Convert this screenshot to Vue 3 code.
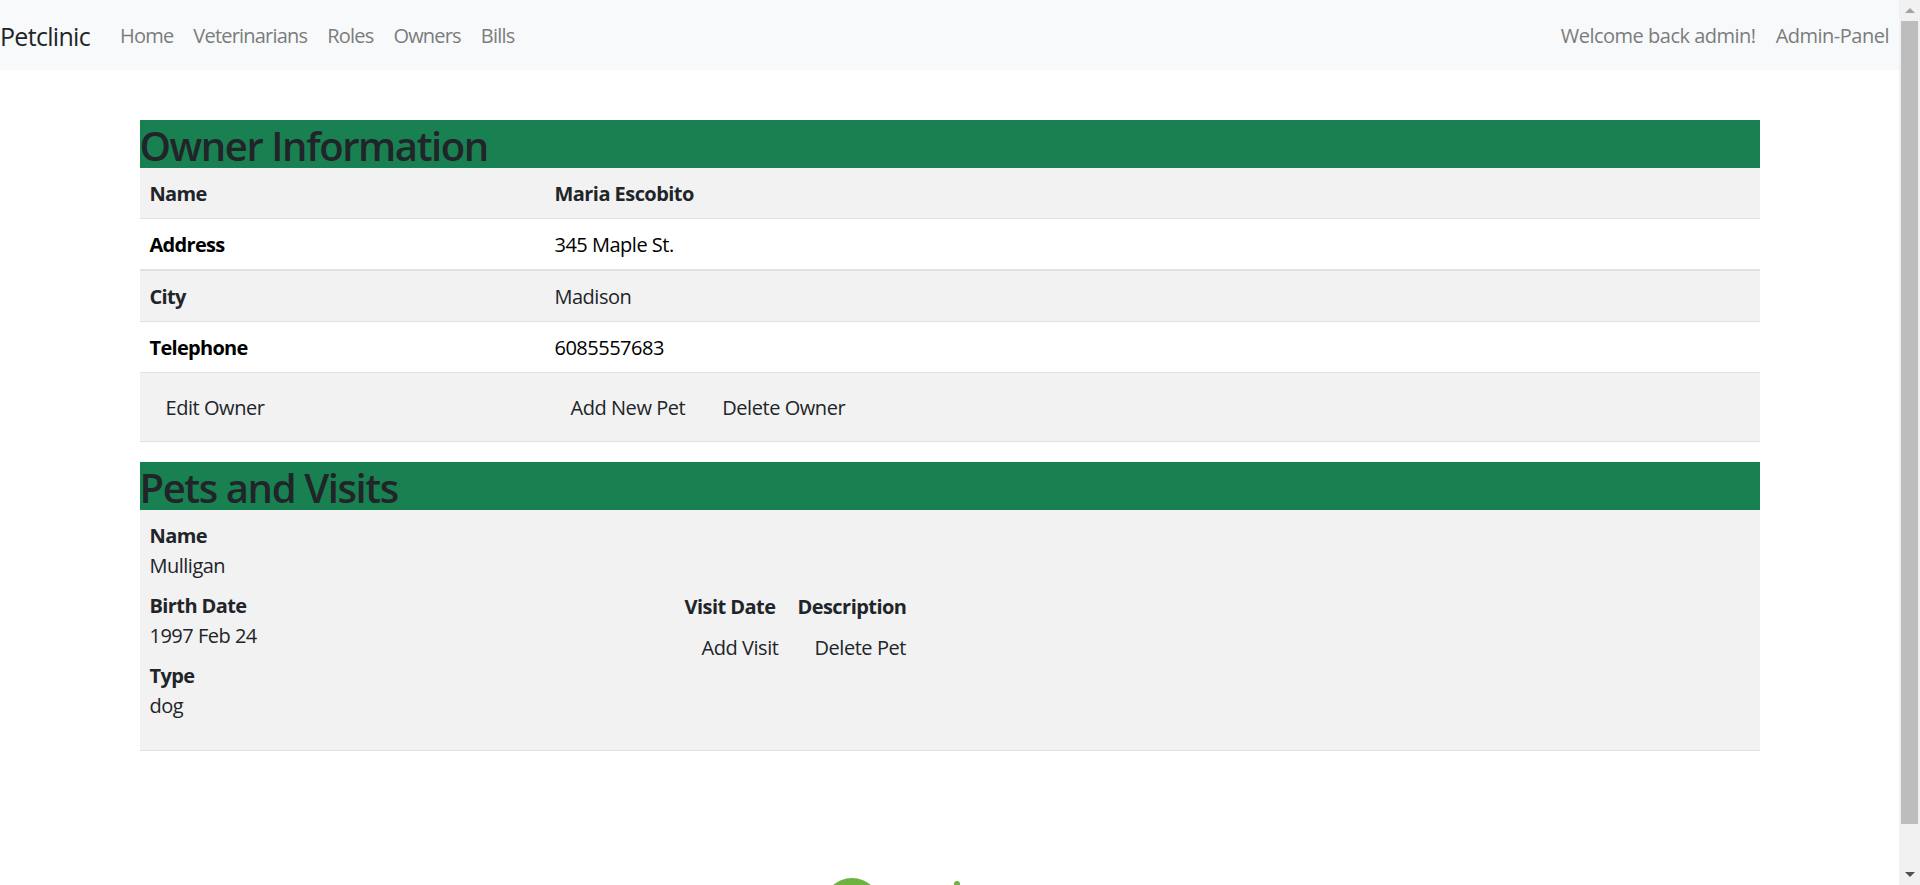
<template>
  <div class="app">
    <div class="page">
      <nav class="navbar">
        <a class="brand">Petclinic</a>
        <a v-for="link in links" :key="link" class="nav-link nav-left">{{ link }}</a>
        <span class="nav-link nav-right">Welcome back admin!</span>
        <a class="nav-link">Admin-Panel</a>
      </nav>

      <main class="container">
        <h2 class="title">Owner Information</h2>
        <table class="info-table">
          <colgroup>
            <col class="col-label" />
            <col />
          </colgroup>
          <tbody>
            <tr v-for="row in ownerRows" :key="row.label">
              <th>{{ row.label }}</th>
              <td :class="{ strong: row.strong }">{{ row.value }}</td>
            </tr>
            <tr class="action-row">
              <td><a class="btn">Edit Owner</a></td>
              <td>
                <a class="btn">Add New Pet</a>
                <a class="btn">Delete Owner</a>
              </td>
            </tr>
          </tbody>
        </table>

        <h2 class="title">Pets and Visits</h2>
        <div class="pet-row">
          <dl class="pet-info">
            <template v-for="item in petInfo" :key="item.label">
              <dt>{{ item.label }}</dt>
              <dd>{{ item.value }}</dd>
            </template>
          </dl>
          <table class="visits">
            <thead>
              <tr>
                <th>Visit Date</th>
                <th>Description</th>
              </tr>
            </thead>
            <tbody>
              <tr>
                <td><a class="btn">Add Visit</a></td>
                <td><a class="btn">Delete Pet</a></td>
              </tr>
            </tbody>
          </table>
        </div>
      </main>

      <footer class="footer">
        <svg class="logo" width="253" height="60" viewBox="0 0 253 60">
          <circle cx="29" cy="29" r="29" fill="#6db33f" />
          <path d="M48 3 L50 0 L51 6 Z" fill="#fff" />
          <circle cx="134" cy="6" r="3" fill="#6db33f" />
        </svg>
      </footer>
    </div>

    <div class="scrollbar">
      <span class="arrow arrow-up"></span>
      <div class="track"><div class="thumb"></div></div>
      <span class="arrow arrow-down"></span>
    </div>
  </div>
</template>

<script setup>
const links = ['Home', 'Veterinarians', 'Roles', 'Owners', 'Bills']

const ownerRows = [
  { label: 'Name', value: 'Maria Escobito', strong: true },
  { label: 'Address', value: '345 Maple St.' },
  { label: 'City', value: 'Madison' },
  { label: 'Telephone', value: '6085557683' },
]

const petInfo = [
  { label: 'Name', value: 'Mulligan' },
  { label: 'Birth Date', value: '1997 Feb 24' },
  { label: 'Type', value: 'dog' },
]
</script>

<style>
html, body { margin: 0; overflow: hidden; }
</style>

<style scoped>
.app {
  display: flex;
  height: 885px;
  overflow: hidden;
  font-family: "Open Sans", "Noto Sans", sans-serif;
  font-size: 20px;
  line-height: 30px;
  letter-spacing: -0.5px;
  color: #212529;
  background: #fff;
}
.page { flex: 1; min-width: 0; }

.navbar {
  display: flex;
  align-items: center;
  height: 70px;
  padding-top: 2px;
  box-sizing: border-box;
  background: #f8f9fa;
}
.brand { font-size: 25px; margin-right: 20px; letter-spacing: -0.7px; width: 90px; }
.nav-link { padding: 0 10px; color: #7b7c7d; }
.nav-left { letter-spacing: -0.8px; }
.nav-right { margin-left: auto; }

.container { width: 1620px; margin: 50px auto 0; }
.title {
  margin: 0;
  height: 48px;
  font-size: 40px;
  line-height: 52px;
  font-weight: 600;
  letter-spacing: -1.4px;
  background: #198051;
}

.info-table { width: 100%; border-collapse: collapse; margin-bottom: 20px; }
.col-label { width: 405px; }
.info-table th, .info-table td {
  padding: 11px 10px 9px;
  text-align: left;
  border-bottom: 1px solid #dee2e6;
  color: #000;
}
.info-table tr:nth-child(2) th,
.info-table tr:nth-child(2) td { border-bottom-width: 2px; }
.info-table th { font-weight: 700; letter-spacing: -0.7px; }
.info-table tr:nth-child(odd) th,
.info-table tr:nth-child(odd) td { background: #f2f2f2; color: #212529; }
.info-table td.strong { font-weight: 700; letter-spacing: -0.55px; }

.btn {
  display: inline-block;
  padding: 8px 16px;
  color: #212529;
  letter-spacing: -0.45px;
}
.action-row td .btn + .btn { margin-left: 5px; }
.action-row td { padding-top: 12px; padding-bottom: 10px; }

.pet-row {
  display: flex;
  align-items: center;
  padding: 11px 10px 9px;
  background: #f2f2f2;
  border-bottom: 1px solid #dee2e6;
}
.pet-info { width: 525px; margin: 0 0 10px; }
.pet-info dt { font-weight: 700; letter-spacing: -0.6px; }
.pet-info dd { margin: 0 0 10px; }

.visits { border-collapse: collapse; margin-bottom: 10px; }
.visits th { padding: 11px 10px 9px; font-weight: 700; text-align: left; letter-spacing: -0.55px; }
.visits td { padding: 0; }
.visits td .btn { padding: 2px 9px 9px 27px; }

.footer { display: flex; justify-content: center; margin-top: 127px; }
.logo { display: block; }

.scrollbar {
  display: flex;
  flex-direction: column;
  align-items: center;
  width: 21px;
  background: #f1f1f1;
}
.track { flex: 1; width: 17px; }
.thumb { height: 803px; background: #bdbdbd; }
.arrow { display: block; width: 0; height: 0; border-left: 5px solid transparent; border-right: 5px solid transparent; }
.arrow-up { margin: 8px 0 8px; border-bottom: 5px solid #a3a3a3; }
.arrow-down { margin: 8px 0; border-top: 5px solid #505050; }
</style>
